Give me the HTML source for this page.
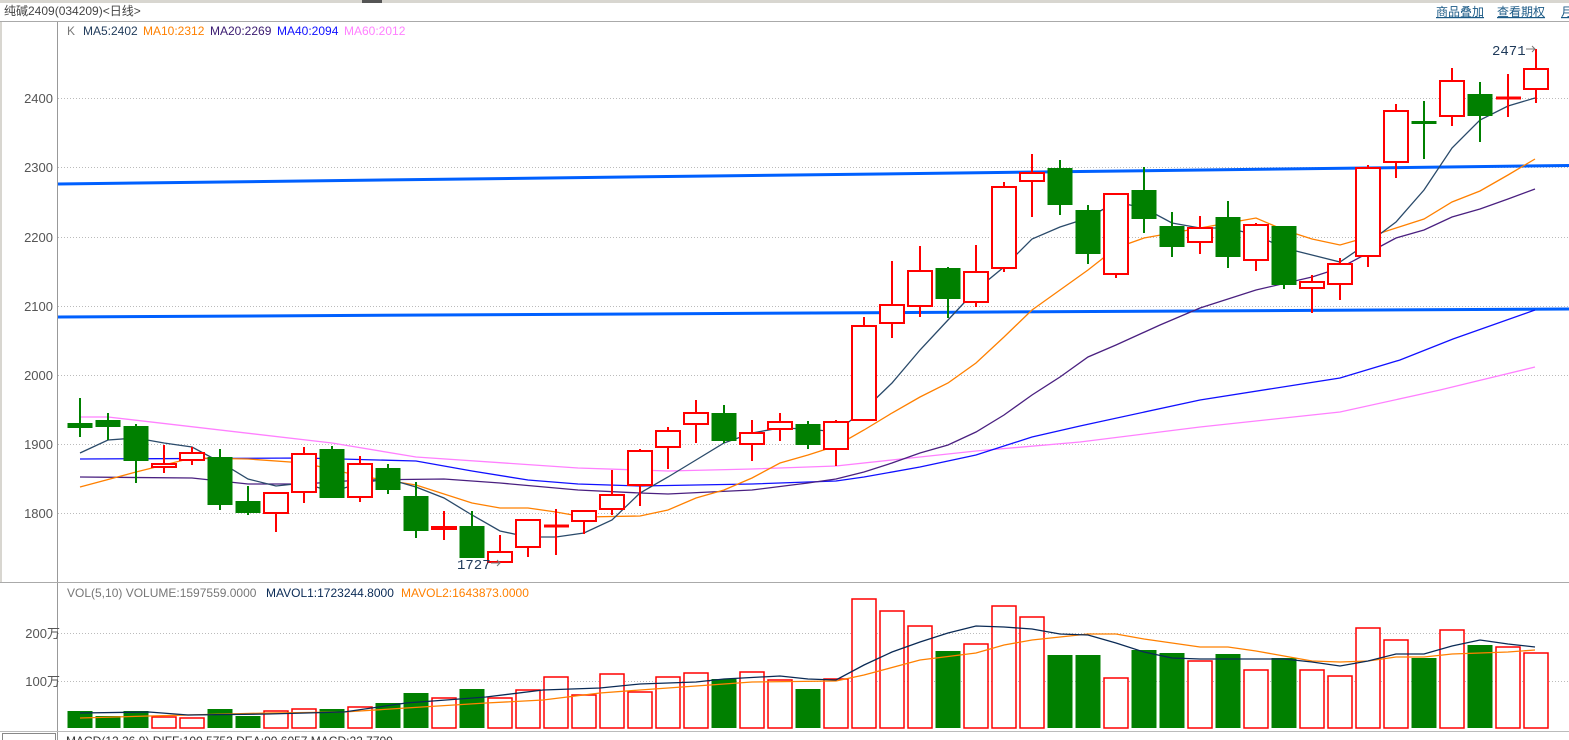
<!DOCTYPE html>
<html><head><meta charset="utf-8"><style>
html,body{margin:0;padding:0;background:#fff;width:1569px;height:740px;overflow:hidden}
svg{display:block}
text{font-family:"Liberation Sans","Noto Sans CJK SC",sans-serif}
</style></head><body>
<svg width="1569" height="740" viewBox="0 0 1569 740" xmlns="http://www.w3.org/2000/svg">
<rect x="0" y="0" width="1569" height="3" fill="#d8d6d0"/>
<rect x="362" y="0" width="20" height="3" fill="#555"/>
<text x="4" y="15" font-size="12" fill="#444">纯碱2409(034209)&lt;日线&gt;</text>
<g font-size="12" fill="#1b5a86" text-decoration="underline">
<text x="1436" y="16">商品叠加</text><text x="1497" y="16">查看期权</text><text x="1561" y="16">月</text></g>
<line x1="0" y1="21.5" x2="1569" y2="21.5" stroke="#aaa"/>
<line x1="57.5" y1="22" x2="57.5" y2="740" stroke="#999"/>
<line x1="0" y1="582.5" x2="1569" y2="582.5" stroke="#aaa"/>
<line x1="0" y1="731.5" x2="1569" y2="731.5" stroke="#bbb"/>
<rect x="2.5" y="733.5" width="53" height="10" fill="none" stroke="#888"/>
<rect x="0" y="22" width="2" height="560" fill="#d8d6d0"/>
<text x="66" y="745" font-size="12" fill="#333">MACD(12,26,9) DIFF:100.5753 DEA:90.6057 MACD:22.7700</text>

<g stroke="#bbb" stroke-dasharray="1,2" stroke-width="1">
<line x1="58" y1="98.5" x2="1569" y2="98.5"/><line x1="58" y1="167.5" x2="1569" y2="167.5"/>
<line x1="58" y1="237.5" x2="1569" y2="237.5"/><line x1="58" y1="306.5" x2="1569" y2="306.5"/>
<line x1="58" y1="375.5" x2="1569" y2="375.5"/><line x1="58" y1="444.5" x2="1569" y2="444.5"/>
<line x1="58" y1="513.5" x2="1569" y2="513.5"/>
<line x1="58" y1="633.5" x2="1569" y2="633.5"/><line x1="58" y1="681.5" x2="1569" y2="681.5"/>
</g>
<g font-size="13" fill="#555" text-anchor="end">
<text x="53" y="103">2400</text><text x="53" y="172">2300</text><text x="53" y="242">2200</text>
<text x="53" y="311">2100</text><text x="53" y="380">2000</text><text x="53" y="449">1900</text>
<text x="53" y="518">1800</text><text x="60" y="638">200万</text><text x="60" y="686">100万</text>
</g>

<g font-size="12">
<text x="67" y="35" fill="#777">K</text>
<text x="83" y="35" fill="#1f3a5a">MA5:2402</text>
<text x="143" y="35" fill="#ff8000">MA10:2312</text>
<text x="210" y="35" fill="#3a1a70">MA20:2269</text>
<text x="277" y="35" fill="#1010ff">MA40:2094</text>
<text x="344" y="35" fill="#ff80ff">MA60:2012</text>
<text x="67" y="597" fill="#777">VOL(5,10) VOLUME:1597559.0000</text>
<text x="266" y="597" fill="#0a2a55">MAVOL1:1723244.8000</text>
<text x="401" y="597" fill="#ff8000">MAVOL2:1643873.0000</text>
</g>

<line x1="58" y1="184" x2="1569" y2="165.5" stroke="#0060ff" stroke-width="3"/>
<line x1="58" y1="317" x2="1569" y2="309" stroke="#0060ff" stroke-width="3"/>

<g fill="none" stroke-width="1.3">
<polyline stroke="#ff80ff" points="80,417 108,417 332,443 416,457 578,468 668,471 752,469 836,466 920,457 976,451 1080,442 1200,427 1340,412 1440,390 1535,367"/>
<polyline stroke="#1010ff" points="80,459 304,458 416,461 472,471 528,480 578,484 640,486 752,484 836,481 864,477 920,467 976,455 1032,437 1080,426 1200,400 1340,378 1400,360 1453,339 1535,310"/>
<polyline stroke="#4a2080" points="80,477 192,478 248,484 304,484 360,480 444,479 500,483 578,490 640,493 668,494 752,490 808,483 836,479 864,472 892,463 920,453 948,445 976,432 1004,415 1032,395 1060,377 1088,357 1116,345 1160,325 1200,308 1256,290 1312,277 1340,268 1368,253 1396,238 1424,230 1452,217 1480,209 1508,199 1535,189"/>
<polyline stroke="#ff8000" points="80,487 136,472 192,458 248,459 304,463 360,476 416,485 472,503 500,508 528,508 556,512 584,517 640,516 668,510 696,498 724,490 752,478 780,463 808,455 836,446 864,430 892,413 920,397 948,383 976,363 1004,337 1032,310 1060,290 1088,270 1116,248 1144,238 1172,233 1200,228 1228,223 1256,218 1284,230 1312,239 1340,245 1368,237 1396,228 1424,219 1452,202 1480,191 1508,175 1535,159"/>
<polyline stroke="#2a4a6a" points="80,453 108,440 136,438 164,443 192,447 220,462 248,479 276,486 304,483 332,492 360,483 388,479 416,487 444,498 472,515 500,531 528,537 556,537 584,533 612,520 640,493 668,477 696,460 724,443 752,433 780,428 808,429 836,432 864,410 892,383 920,350 948,320 976,290 1004,267 1032,239 1060,227 1088,218 1116,202 1144,208 1172,223 1200,228 1228,228 1256,235 1284,248 1312,255 1340,262 1368,243 1396,222 1424,190 1452,148 1480,120 1508,106 1535,98"/>
</g>

<path stroke="#008000" stroke-width="2" fill="none" d="M80 398V437M108 413V440M136 424V483M220 449V510M248 486V515M332 446V498M388 464V494M416 482V538M472 511V558M724 405V443M808 421V449M948 267V318M1060 160V215M1088 205V264M1144 167V233M1172 212V257M1228 201V268M1284 226V289M1424 101V159M1480 82V142"/>
<path stroke="#f00" stroke-width="2" fill="none" d="M164 445V473M192 447V465M276 493V532M304 447V503M360 456V502M444 511V540M500 535V562M528 520V557M556 509V555M584 511V534M612 470V515M640 449V506M668 427V469M696 400V443M752 420V461M780 413V441M836 420V466M864 317V420M892 261V338M920 246V317M976 245V307M1004 182V272M1032 154V217M1116 194V278M1200 216V254M1256 223V271M1312 275V313M1340 258V300M1368 165V267M1396 104V178M1452 68V126M1508 74V117M1536 49V103"/>

<g fill="#008000">
<rect x="67.5" y="423" width="25" height="5"/><rect x="95.5" y="420" width="25" height="7"/>
<rect x="123.5" y="426" width="25" height="35"/><rect x="207.5" y="457" width="25" height="48"/>
<rect x="235.5" y="501" width="25" height="12"/><rect x="319.5" y="449" width="25" height="49"/>
<rect x="375.5" y="468" width="25" height="22"/><rect x="403.5" y="496" width="25" height="35"/>
<rect x="459.5" y="526" width="25" height="32"/><rect x="711.5" y="413" width="25" height="28"/>
<rect x="795.5" y="424" width="25" height="21"/><rect x="935.5" y="268" width="25" height="31"/>
<rect x="1047.5" y="168" width="25" height="37"/><rect x="1075.5" y="210" width="25" height="44"/>
<rect x="1131.5" y="190" width="25" height="29"/><rect x="1159.5" y="226" width="25" height="21"/>
<rect x="1215.5" y="217" width="25" height="40"/><rect x="1271.5" y="226" width="25" height="59"/>
<rect x="1411.5" y="121" width="25" height="3"/><rect x="1467.5" y="94" width="25" height="22"/>
</g>
<g fill="#fff" stroke="#f00" stroke-width="2">
<rect x="152" y="464" width="24" height="3"/><rect x="180" y="453" width="24" height="7"/>
<rect x="264" y="493" width="24" height="20"/><rect x="292" y="454" width="24" height="38"/>
<rect x="348" y="464" width="24" height="33"/><rect x="432" y="527" width="24" height="2"/>
<rect x="488" y="552" width="24" height="10"/><rect x="516" y="520" width="24" height="27"/>
<rect x="572" y="511" width="24" height="10"/><rect x="600" y="495" width="24" height="14"/>
<rect x="628" y="451" width="24" height="34"/><rect x="656" y="431" width="24" height="16"/>
<rect x="684" y="413" width="24" height="11"/><rect x="740" y="433" width="24" height="11"/>
<rect x="768" y="422" width="24" height="7"/><rect x="824" y="422" width="24" height="27"/>
<rect x="852" y="326" width="24" height="94"/><rect x="880" y="305" width="24" height="18"/>
<rect x="908" y="271" width="24" height="35"/><rect x="964" y="272" width="24" height="30"/>
<rect x="992" y="187" width="24" height="81"/><rect x="1020" y="173" width="24" height="8"/>
<rect x="1104" y="194" width="24" height="80"/><rect x="1188" y="228" width="24" height="14"/>
<rect x="1244" y="225" width="24" height="35"/><rect x="1300" y="282" width="24" height="6"/>
<rect x="1328" y="264" width="24" height="20"/><rect x="1356" y="168" width="24" height="88"/>
<rect x="1384" y="111" width="24" height="51"/><rect x="1440" y="81" width="24" height="35"/>
<rect x="1524" y="69" width="24" height="20"/>
</g>
<rect x="544" y="524.5" width="25" height="3" fill="#f00"/>
<rect x="1496" y="96.5" width="25" height="3" fill="#f00"/>

<g font-size="14" fill="#1f3a5a">
<text x="1492" y="55" style="font-family:'Liberation Mono',monospace">2471</text>
<text x="457" y="569" style="font-family:'Liberation Mono',monospace">1727</text></g>
<path d="M1526 49H1535M1532 46L1535 49L1532 52M491 563H500M497 560L500 563L497 566" stroke="#777" fill="none"/>

<g fill="#008000">
<rect x="67.5" y="711" width="25" height="17"/><rect x="95.5" y="716" width="25" height="12"/>
<rect x="123.5" y="711" width="25" height="17"/><rect x="207.5" y="709" width="25" height="19"/>
<rect x="235.5" y="716" width="25" height="12"/><rect x="319.5" y="709" width="25" height="19"/>
<rect x="375.5" y="703" width="25" height="25"/><rect x="403.5" y="693" width="25" height="35"/>
<rect x="459.5" y="689" width="25" height="39"/><rect x="711.5" y="679" width="25" height="49"/>
<rect x="795.5" y="689" width="25" height="39"/><rect x="935.5" y="651" width="25" height="77"/>
<rect x="1047.5" y="655" width="25" height="73"/><rect x="1075.5" y="655" width="25" height="73"/>
<rect x="1131.5" y="650" width="25" height="78"/><rect x="1159.5" y="653" width="25" height="75"/>
<rect x="1215.5" y="654" width="25" height="74"/><rect x="1271.5" y="658" width="25" height="70"/>
<rect x="1411.5" y="658" width="25" height="70"/><rect x="1467.5" y="645" width="25" height="83"/>
</g>
<g fill="#fff" stroke="#f00" stroke-width="1.5">
<rect x="152" y="717" width="24" height="11"/><rect x="180" y="718" width="24" height="10"/>
<rect x="264" y="711" width="24" height="17"/><rect x="292" y="709" width="24" height="19"/>
<rect x="348" y="707" width="24" height="21"/><rect x="432" y="698" width="24" height="30"/>
<rect x="488" y="698" width="24" height="30"/><rect x="516" y="690" width="24" height="38"/>
<rect x="544" y="677" width="24" height="51"/><rect x="572" y="695" width="24" height="33"/>
<rect x="600" y="674" width="24" height="54"/><rect x="628" y="692" width="24" height="36"/>
<rect x="656" y="677" width="24" height="51"/><rect x="684" y="673" width="24" height="55"/>
<rect x="740" y="672" width="24" height="56"/><rect x="768" y="680" width="24" height="48"/>
<rect x="824" y="679" width="24" height="49"/><rect x="852" y="599" width="24" height="129"/>
<rect x="880" y="611" width="24" height="117"/><rect x="908" y="626" width="24" height="102"/>
<rect x="964" y="644" width="24" height="84"/><rect x="992" y="606" width="24" height="122"/>
<rect x="1020" y="617" width="24" height="111"/><rect x="1104" y="678" width="24" height="50"/>
<rect x="1188" y="661" width="24" height="67"/><rect x="1244" y="670" width="24" height="58"/>
<rect x="1300" y="670" width="24" height="58"/><rect x="1328" y="676" width="24" height="52"/>
<rect x="1356" y="628" width="24" height="100"/><rect x="1384" y="640" width="24" height="88"/>
<rect x="1440" y="630" width="24" height="98"/><rect x="1496" y="647" width="24" height="81"/>
<rect x="1524" y="653" width="24" height="75"/>
</g>
<g fill="none" stroke-width="1.3">
<polyline stroke="#ff8000" points="80,718 149,716 268,713 344,712 406,708 486,703 543,700 600,693 640,690 696,686 752,682 836,681 864,675 920,660 976,653 1004,645 1032,640 1088,634 1116,634 1144,639 1200,647 1228,647 1256,651 1284,656 1312,661 1340,662 1368,661 1396,657 1424,657 1452,654 1480,653 1508,652 1535,650"/>
<polyline stroke="#0a2a55" points="80,713 149,712 188,715 268,714 344,712 406,703 486,697 543,690 600,688 640,684 696,682 724,679 780,676 808,679 836,680 864,665 892,652 920,642 948,633 976,626 1004,627 1032,629 1060,634 1088,635 1116,643 1144,652 1172,658 1200,659 1284,659 1312,662 1340,666 1368,661 1396,654 1424,654 1452,646 1480,640 1508,644 1535,647"/>
</g>
</svg>
</body></html>
